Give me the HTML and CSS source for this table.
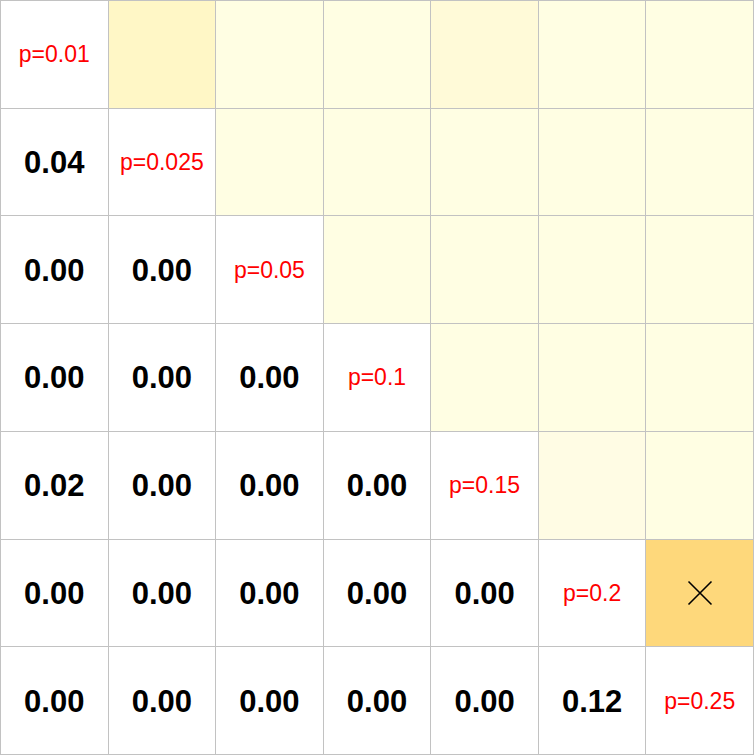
FILE: index.html
```html
<!DOCTYPE html>
<html>
<head>
<meta charset="utf-8">
<link rel="stylesheet" href="styles.css">
</head>
<body>
<div class="grid">
  <div class="cell p">p=0.01</div>
  <div class="cell y2"></div>
  <div class="cell y"></div>
  <div class="cell y"></div>
  <div class="cell y3"></div>
  <div class="cell y"></div>
  <div class="cell y"></div>

  <div class="cell v">0.04</div>
  <div class="cell p">p=0.025</div>
  <div class="cell y"></div>
  <div class="cell y"></div>
  <div class="cell y"></div>
  <div class="cell y"></div>
  <div class="cell y"></div>

  <div class="cell v">0.00</div>
  <div class="cell v">0.00</div>
  <div class="cell p">p=0.05</div>
  <div class="cell y"></div>
  <div class="cell y"></div>
  <div class="cell y"></div>
  <div class="cell y"></div>

  <div class="cell v">0.00</div>
  <div class="cell v">0.00</div>
  <div class="cell v">0.00</div>
  <div class="cell p">p=0.1</div>
  <div class="cell y"></div>
  <div class="cell y"></div>
  <div class="cell y"></div>

  <div class="cell v">0.02</div>
  <div class="cell v">0.00</div>
  <div class="cell v">0.00</div>
  <div class="cell v">0.00</div>
  <div class="cell p">p=0.15</div>
  <div class="cell y4"></div>
  <div class="cell y"></div>

  <div class="cell v">0.00</div>
  <div class="cell v">0.00</div>
  <div class="cell v">0.00</div>
  <div class="cell v">0.00</div>
  <div class="cell v">0.00</div>
  <div class="cell p">p=0.2</div>
  <div class="cell o"><svg width="26" height="26" viewBox="0 0 26 26"><path d="M1.5 1.5 L24.5 24.5 M24.5 1.5 L1.5 24.5" stroke="#000" stroke-width="1.6" fill="none"/></svg></div>

  <div class="cell v">0.00</div>
  <div class="cell v">0.00</div>
  <div class="cell v">0.00</div>
  <div class="cell v">0.00</div>
  <div class="cell v">0.00</div>
  <div class="cell v">0.12</div>
  <div class="cell p">p=0.25</div>
</div>
</body>
</html>
```
FILE: styles.css
```css
html, body {
  margin: 0;
  padding: 0;
  background: #fff;
}
.grid {
  width: 754px;
  height: 755px;
  box-sizing: border-box;
  display: grid;
  grid-template-columns: repeat(7, 1fr);
  grid-template-rows: repeat(7, 1fr);
  border-top: 1px solid #c2c2c2;
  border-left: 1px solid #c2c2c2;
  font-family: "Liberation Sans", Arial, sans-serif;
}
.cell {
  box-sizing: border-box;
  border-right: 1px solid #c2c2c2;
  border-bottom: 1px solid #c2c2c2;
  display: flex;
  align-items: center;
  justify-content: center;
  background: #fff;
}
.p {
  color: #ff0000;
  font-size: 23px;
  padding-top: 1px;
}
.v {
  color: #000;
  font-weight: bold;
  font-size: 31px;
  padding-top: 2px;
}
.y { background: #fffee3; }
.y2 { background: #fff7c6; }
.y3 { background: #fffad8; }
.y4 { background: #fffce4; }
.o { background: #fed87b; }
```
